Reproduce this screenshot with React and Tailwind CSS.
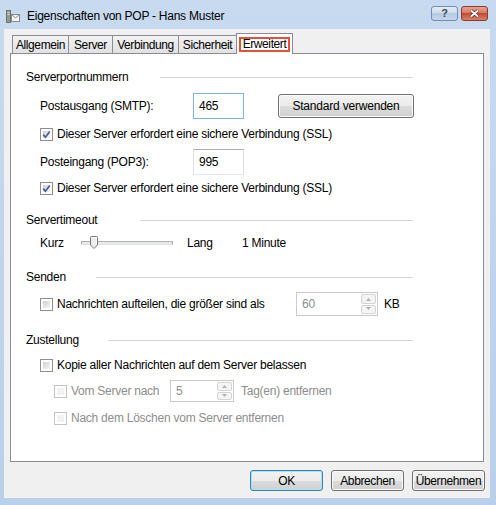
import React from 'react';

const btn =
  "h-[21px] rounded-[3px] border bg-[linear-gradient(to_bottom,#f2f2f2_0%,#ebebeb_50%,#dddddd_50%,#cfcfcf_100%)] flex items-center justify-center tracking-[-0.4px]";

function Check({ checked, disabled }) {
  return (
    <span
      className={`w-[13px] h-[13px] shrink-0 border p-[2px] bg-white flex ${
        disabled ? 'border-[#c4c4c4]' : 'border-[#8e8f8f]'
      }`}
    >
      <span
        className={`relative flex-1 ${
          disabled ? 'bg-[#f2f2f2]' : 'bg-gradient-to-br from-[#cbcfd5] to-[#f7f7f7]'
        }`}
      >
        {checked && (
          <svg width="11" height="11" viewBox="0 0 11 11" className="absolute left-[-2px] top-[-2px]">
            <path d="M2.2 5.6 L4.4 8.2 L8.8 2.4" fill="none" stroke="#4b5e94" strokeWidth="1.7" />
          </svg>
        )}
      </span>
    </span>
  );
}

function Group({ title, line }) {
  return (
    <div className="h-[16px] w-[387px] flex items-center">
      <span>{title}</span>
      <div className={`ml-auto h-px bg-[#d3d3d3] ${line}`} />
    </div>
  );
}

function Spin({ value, w, h }) {
  return (
    <div className={`${w} ${h} border border-[#c9cbcf] bg-white flex text-[#8d8d8d]`}>
      <span className="flex-1 flex items-center pl-[5px]">{value}</span>
      <div className="w-[17px] flex flex-col gap-px p-px">
        {['M3 5 L5.5 2 L8 5', 'M3 1 L5.5 4 L8 1'].map((d) => (
          <span key={d} className="flex-1 border border-[#d4d4d4] bg-[#f4f4f4] rounded-[2px] flex items-center justify-center">
            <svg width="11" height="6" viewBox="0 0 11 6">
              <path d={d} fill="#b0b0b0" />
            </svg>
          </span>
        ))}
      </div>
    </div>
  );
}

export default function App() {
  const tabs = [
    { label: 'Allgemein', w: 'w-[57px]' },
    { label: 'Server', w: 'w-[45px]' },
    { label: 'Verbindung', w: 'w-[67px]' },
    { label: 'Sicherheit', w: 'w-[59px]' },
  ];

  return (
    <div className="w-[496px] h-[505px] flex flex-col bg-gradient-to-b from-[#c7daef] to-[#b9d0ea] font-['Liberation_Sans',Arial,sans-serif] text-[12px] tracking-[-0.25px] text-black">
      {/* title bar */}
      <div className="h-[29px] flex items-center pl-[6px] pr-[8px] pt-[3px]">
        <svg width="14" height="13" viewBox="0 0 14 13">
          <rect x="0.5" y="0.5" width="4" height="12" fill="#8f9a8f" stroke="#6c756c" />
          <rect x="1.5" y="2" width="2" height="1" fill="#d8e0d8" />
          <rect x="1.5" y="4" width="2" height="1" fill="#d8e0d8" />
          <rect x="5.5" y="4.5" width="8" height="7" fill="#f4f4f4" stroke="#8a8a8a" />
          <path d="M5.5 4.5 L9.5 8 L13.5 4.5" fill="none" stroke="#8a8a8a" />
        </svg>
        <span className="ml-[7px]">Eigenschaften von POP - Hans Muster</span>
        <div className="ml-auto flex gap-[3px] -mt-[5px]">
          <div className="w-[27px] h-[15px] rounded-[3px] border border-[#6f8db5] bg-[linear-gradient(to_bottom,#e4edf7_0%,#cbd9ea_50%,#b7cae1_50%,#c3d5ea_100%)] flex items-center justify-center text-[11px] font-bold text-[#3c4a5c]">
            ?
          </div>
          <div className="w-[27px] h-[15px] rounded-[3px] border border-[#8c3a30] bg-[linear-gradient(to_bottom,#e8a393_0%,#d7735e_50%,#c44c33_50%,#d9806a_100%)] flex items-center justify-center">
            <svg width="11" height="9" viewBox="0 0 11 9">
              <path d="M2 1.5 L9 7.5 M9 1.5 L2 7.5" stroke="#5a2a22" strokeWidth="3.2" />
              <path d="M2 1.5 L9 7.5 M9 1.5 L2 7.5" stroke="#ffffff" strokeWidth="1.8" />
            </svg>
          </div>
        </div>
      </div>

      {/* client area */}
      <div className="flex-1 ml-[4px] mr-[6px] mb-[7px] bg-[#f0f0f0] flex flex-col">
        {/* tabs */}
        <div className="mt-[4px] h-[20px] ml-[8px] flex items-end">
          {tabs.map((t, i) => (
            <div
              key={t.label}
              className={`${t.w} ${i > 0 ? '-ml-px' : ''} h-[18px] border border-b-0 border-[#898c95] bg-gradient-to-b from-[#f3f3f3] to-[#e1e1e1] flex items-center justify-center tracking-[-0.4px]`}
            >
              {t.label}
            </div>
          ))}
          <div className="w-[57px] -ml-px h-[21px] relative top-px z-10 border border-b-0 border-[#898c95] bg-white flex justify-center pt-[3px]">
            <span className="h-[15px] px-[2px] border-2 border-[#e5503c] leading-[11px] tracking-[-0.4px]">Erweitert</span>
          </div>
        </div>

        {/* panel */}
        <div className="ml-[6px] w-[474px] h-[409px] border border-[#898c95] bg-white flex flex-col pl-[15px] pt-[15px]">
          <Group title="Serverportnummern" line="w-[253px]" />

          <div className="mt-[8px] h-[26px] pl-[14px] flex items-center">
            <span className="w-[153px]">Postausgang (SMTP):</span>
            <div className="w-[51px] h-[26px] border border-[#7eb4ea] bg-white flex items-center pl-[5px]">465</div>
            <div className={`${btn} ml-[34px] w-[136px] !h-[24px] border-[#707070] shadow-[inset_0_0_0_1px_#fbfbfb] !tracking-[-0.2px]`}>
              Standard verwenden
            </div>
          </div>

          <div className="mt-[7px] h-[16px] pl-[14px] flex items-center gap-[4px]">
            <Check checked />
            <span>Dieser Server erfordert eine sichere Verbindung (SSL)</span>
          </div>

          <div className="mt-[7px] h-[26px] pl-[14px] flex items-center">
            <span className="w-[153px]">Posteingang (POP3):</span>
            <div className="w-[51px] h-[26px] border border-[#abadb3] border-x-[#dbdfe6] border-b-[#e3e9ef] bg-white flex items-center pl-[5px]">995</div>
          </div>

          <div className="mt-[5px] h-[16px] pl-[14px] flex items-center gap-[4px]">
            <Check checked />
            <span>Dieser Server erfordert eine sichere Verbindung (SSL)</span>
          </div>

          <div className="mt-[16px]">
            <Group title="Servertimeout" line="w-[273px]" />
          </div>

          <div className="mt-[5px] h-[20px] pl-[14px] flex items-center">
            <span className="w-[41px]">Kurz</span>
            <div className="relative w-[92px] h-[4px] border border-[#b0b0b0] border-b-[#e3e3e3] bg-[#e7eaea]">
              <svg width="8" height="13" viewBox="0 0 8 13" className="absolute left-[8px] top-[-6px]">
                <path d="M1.5 0.5 H6.5 Q7.5 0.5 7.5 1.5 V9 L4 12.5 L0.5 9 V1.5 Q0.5 0.5 1.5 0.5 Z" fill="#ececec" stroke="#7a7a7a" />
                <path d="M1.5 1.5 H6.5 V8.5" fill="none" stroke="#ffffff" />
              </svg>
            </div>
            <span className="ml-[14px] w-[55px]">Lang</span>
            <span>1 Minute</span>
          </div>

          <div className="mt-[16px]">
            <Group title="Senden" line="w-[317px]" />
          </div>

          <div className="mt-[6px] h-[26px] pl-[14px] flex items-center">
            <div className="w-[256px] flex items-center gap-[4px]">
              <Check />
              <span>Nachrichten aufteilen, die größer sind als</span>
            </div>
            <Spin value="60" w="w-[82px]" h="h-[24px]" />
            <span className="ml-[6px]">KB</span>
          </div>

          <div className="mt-[15px]">
            <Group title="Zustellung" line="w-[305px]" />
          </div>

          <div className="mt-[9px] h-[16px] pl-[14px] flex items-center gap-[4px]">
            <Check />
            <span>Kopie aller Nachrichten auf dem Server belassen</span>
          </div>

          <div className="mt-[7px] h-[22px] pl-[28px] flex items-center text-[#8d8d8d]">
            <div className="w-[116px] flex items-center gap-[4px]">
              <Check disabled />
              <span>Vom Server nach</span>
            </div>
            <Spin value="5" w="w-[64px]" h="h-[22px]" />
            <span className="ml-[7px]">Tag(en) entfernen</span>
          </div>

          <div className="mt-[8px] h-[16px] pl-[28px] flex items-center gap-[4px] text-[#8d8d8d]">
            <Check disabled />
            <span>Nach dem Löschen vom Server entfernen</span>
          </div>
        </div>

        {/* buttons */}
        <div className="mt-[8px] flex justify-end gap-[8px] pr-[5px]">
          <div className={`${btn} w-[73px] border-[#3c7fb1] shadow-[inset_0_0_0_1px_#a6e3fb]`}>OK</div>
          <div className={`${btn} w-[73px] border-[#707070] shadow-[inset_0_0_0_1px_#fbfbfb]`}>Abbrechen</div>
          <div className={`${btn} w-[73px] border-[#707070] shadow-[inset_0_0_0_1px_#fbfbfb]`}>Übernehmen</div>
        </div>
      </div>
    </div>
  );
}
